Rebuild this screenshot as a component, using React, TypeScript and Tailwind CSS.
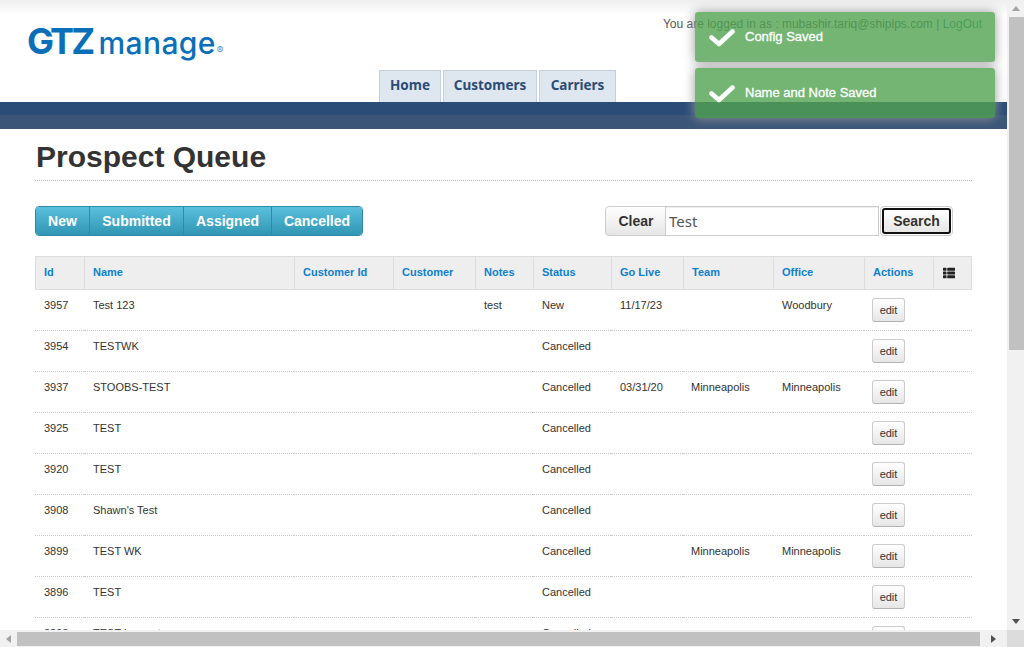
import { FaThList } from 'react-icons/fa';

const rows = [
    { id: '3957', name: 'Test 123', notes: 'test', status: 'New', goLive: '11/17/23', team: '', office: 'Woodbury' },
    { id: '3954', name: 'TESTWK', notes: '', status: 'Cancelled', goLive: '', team: '', office: '' },
    { id: '3937', name: 'STOOBS-TEST', notes: '', status: 'Cancelled', goLive: '03/31/20', team: 'Minneapolis', office: 'Minneapolis' },
    { id: '3925', name: 'TEST', notes: '', status: 'Cancelled', goLive: '', team: '', office: '' },
    { id: '3920', name: 'TEST', notes: '', status: 'Cancelled', goLive: '', team: '', office: '' },
    { id: '3908', name: "Shawn's Test", notes: '', status: 'Cancelled', goLive: '', team: '', office: '' },
    { id: '3899', name: 'TEST WK', notes: '', status: 'Cancelled', goLive: '', team: 'Minneapolis', office: 'Minneapolis' },
    { id: '3896', name: 'TEST', notes: '', status: 'Cancelled', goLive: '', team: '', office: '' },
    { id: '3893', name: 'TEST Lamont', notes: '', status: 'Cancelled', goLive: '', team: '', office: '' },
];

const columns = [
    { label: 'Id', width: 'w-[49px]' },
    { label: 'Name', width: 'w-[210px]' },
    { label: 'Customer Id', width: 'w-[99px]' },
    { label: 'Customer', width: 'w-[82px]' },
    { label: 'Notes', width: 'w-[58px]' },
    { label: 'Status', width: 'w-[78px]' },
    { label: 'Go Live', width: 'w-[72px]' },
    { label: 'Team', width: 'w-[90px]' },
    { label: 'Office', width: 'w-[91px]' },
    { label: 'Actions', width: 'w-[69px]' },
];

const filters = [
    { label: 'New', width: 'w-[53px]' },
    { label: 'Submitted', width: 'w-[94px]' },
    { label: 'Assigned', width: 'w-[88px]' },
    { label: 'Cancelled', width: 'w-[91px]' },
];

function Toast({ text }: { text: string }) {
    return (
        <div className="w-[300px] h-[50px] flex items-start rounded-[3px] bg-[#51a351]/80 shadow-[0_0_12px_#999] pl-[14px] pt-[17px] text-white">
            <svg width="26" height="18" viewBox="0 0 26 18" fill="none" stroke="white" strokeWidth="4.5" strokeLinecap="round" strokeLinejoin="round">
                <path d="M2.5 8.5 L10 15 L23.5 2.5" />
            </svg>
            <div className="ml-[10px] mt-[-1px] text-[13px] leading-[18px] [-webkit-text-stroke:0.3px_white]">{text}</div>
        </div>
    );
}

function App() {
    return (
        <div className="relative w-[1024px] h-[647px] overflow-hidden bg-white flex flex-col font-['Liberation_Sans',Arial,sans-serif] text-[#333]">
            <div className="flex flex-1 min-h-0">
                <main className="flex-1 min-w-0 overflow-hidden">
                    <header className="h-[102px] flex flex-col bg-gradient-to-b from-[#eeeeee] to-white to-[15px]">
                        <div className="flex justify-between">
                            <div className="ml-[27px] mt-[19px] flex items-baseline text-[#0a6fb8] font-['Inter',sans-serif]">
                                <span className="text-[36px] leading-[44px] font-bold tracking-[-2.8px]">GTZ</span>
                                <span className="ml-[6px] text-[30px] leading-[44px] font-medium tracking-[0.4px]">manage</span>
                                <span className="ml-[1px] text-[10px] text-[#4a90c8]">®</span>
                            </div>
                            <div className="mr-[25px] mt-[17px] text-[12px] leading-[14px] text-[#555]">
                                You are logged in as : mubashir.tariq@shiplps.com | <span className="text-[#2a8a8a]">LogOut</span>
                            </div>
                        </div>
                        <nav className="ml-[379px] mt-auto flex gap-[2px] font-['Noto_Sans',sans-serif] text-[13.5px] font-bold text-[#2b4c77]">
                            <a className="h-[32px] w-[62px] pb-[2px] flex items-center justify-center bg-[#dee6ef] border border-b-0 border-[#c5d0dc]">Home</a>
                            <a className="h-[32px] w-[94px] pb-[2px] flex items-center justify-center bg-[#dee6ef] border border-b-0 border-[#c5d0dc]">Customers</a>
                            <a className="h-[32px] w-[77px] pb-[2px] flex items-center justify-center bg-[#dee6ef] border border-b-0 border-[#c5d0dc]">Carriers</a>
                        </nav>
                    </header>
                    <div className="h-[27px] flex flex-col">
                        <div className="h-[13px] bg-[#2b4c77]" />
                        <div className="h-[14px] bg-[#3a5578]" />
                    </div>

                    <div className="ml-[35px] w-[937px]">
                        <h1 className="h-[52px] border-b border-dotted border-[#bbb] pt-[11px] pl-px text-[30px] leading-[34px] font-bold text-[#333]">
                            Prospect Queue
                        </h1>

                        <div className="mt-[25px] flex justify-between pr-[19px]">
                            <div className="flex h-[30px] rounded-[4px] border border-[#2f8aa8] overflow-hidden text-[14px] font-bold text-white [text-shadow:0_-1px_0_rgba(0,0,0,0.25)]">
                                {filters.map((f, i) => (
                                    <button key={f.label} className={`${f.width} bg-gradient-to-b from-[#5bc0de] to-[#2f96b4] ${i > 0 ? 'border-l border-[#2f8aa8]' : ''}`}>
                                        {f.label}
                                    </button>
                                ))}
                            </div>
                            <div className="flex h-[30px]">
                                <button className="w-[61px] pl-px rounded-l-[4px] border border-[#ccc] bg-gradient-to-b from-white to-[#e6e6e6] text-[14px] font-bold text-[#333]">Clear</button>
                                <input
                                    readOnly
                                    value="Test"
                                    className="w-[214px] -ml-px border border-[#ccc] bg-white px-[3px] font-['Noto_Sans',sans-serif] text-[15px] text-[#555] shadow-[inset_0_1px_1px_rgba(0,0,0,0.075)] outline-none"
                                />
                                <div className="ml-px w-[73px] rounded-[4px] border border-[#ccc] p-px">
                                    <button className="w-full h-full rounded-[3px] border-2 border-[#111] bg-gradient-to-b from-white to-[#e6e6e6] text-[14px] font-bold text-[#333]">Search</button>
                                </div>
                            </div>
                        </div>

                        <table className="mt-[20px] w-[937px] table-fixed border-separate border-spacing-0 text-[11px] leading-[18px]">
                            <thead>
                                <tr className="h-[34px] bg-[#eeeeee] text-left">
                                    {columns.map(col => (
                                        <th key={col.label} className={`${col.width} border-y border-l border-[#ddd] pl-[8px] pb-[3px] font-bold text-[#0f7fd0]`}>
                                            {col.label}
                                        </th>
                                    ))}
                                    <th className="border border-[#ddd] pl-[9px] text-[#222]">
                                        <FaThList size={12} />
                                    </th>
                                </tr>
                            </thead>
                            <tbody>
                                {rows.map(row => (
                                    <tr key={row.id} className="h-[41px] align-top">
                                        <td className="border-b border-dotted border-[#ccc] pl-[9px] pt-[6px]">{row.id}</td>
                                        <td className="border-b border-dotted border-[#ccc] pl-[9px] pt-[6px]">{row.name}</td>
                                        <td className="border-b border-dotted border-[#ccc]" />
                                        <td className="border-b border-dotted border-[#ccc]" />
                                        <td className="border-b border-dotted border-[#ccc] pl-[9px] pt-[6px]">{row.notes}</td>
                                        <td className="border-b border-dotted border-[#ccc] pl-[9px] pt-[6px]">{row.status}</td>
                                        <td className="border-b border-dotted border-[#ccc] pl-[9px] pt-[6px]">{row.goLive}</td>
                                        <td className="border-b border-dotted border-[#ccc] pl-[8px] pt-[6px]">{row.team}</td>
                                        <td className="border-b border-dotted border-[#ccc] pl-[9px] pt-[6px]">{row.office}</td>
                                        <td className="border-b border-dotted border-[#ccc] pl-[8px] pt-[8px]">
                                            <button className="block w-[33px] h-[24px] rounded-[3px] border border-[#ccc] border-b-[#b3b3b3] bg-gradient-to-b from-white to-[#e6e6e6] text-[11px] text-[#333]">edit</button>
                                        </td>
                                        <td className="border-b border-dotted border-[#ccc]" />
                                    </tr>
                                ))}
                            </tbody>
                        </table>
                    </div>
                </main>

                {/* vertical scrollbar */}
                <div className="w-[17px] flex flex-col items-center bg-[#f1f1f1]">
                    <div className="h-[17px] flex items-center">
                        <div className="w-0 h-0 border-x-[4px] border-x-transparent border-b-[5px] border-b-[#a3a3a3]" />
                    </div>
                    <div className="ml-[1px] w-[15px] h-[333px] bg-[#c1c1c1]" />
                    <div className="mt-auto h-[17px] flex items-center">
                        <div className="w-0 h-0 border-x-[4px] border-x-transparent border-t-[5px] border-t-[#505050]" />
                    </div>
                </div>
            </div>

            {/* horizontal scrollbar */}
            <div className="h-[17px] flex items-center bg-[#f1f1f1]">
                <div className="w-[17px] flex justify-center">
                    <div className="w-0 h-0 border-y-[4px] border-y-transparent border-r-[5px] border-r-[#a3a3a3]" />
                </div>
                <div className="w-[963px] h-[14px] bg-[#c1c1c1]" />
                <div className="flex-1 flex justify-center">
                    <div className="w-0 h-0 border-y-[4px] border-y-transparent border-l-[5px] border-l-[#505050]" />
                </div>
                <div className="w-[17px] h-[17px] bg-[#dcdcdc]" />
            </div>

            <div className="absolute left-[695px] top-[12px] flex flex-col gap-[6px]">
                <Toast text="Config Saved" />
                <Toast text="Name and Note Saved" />
            </div>
        </div>
    );
}

export default App;
